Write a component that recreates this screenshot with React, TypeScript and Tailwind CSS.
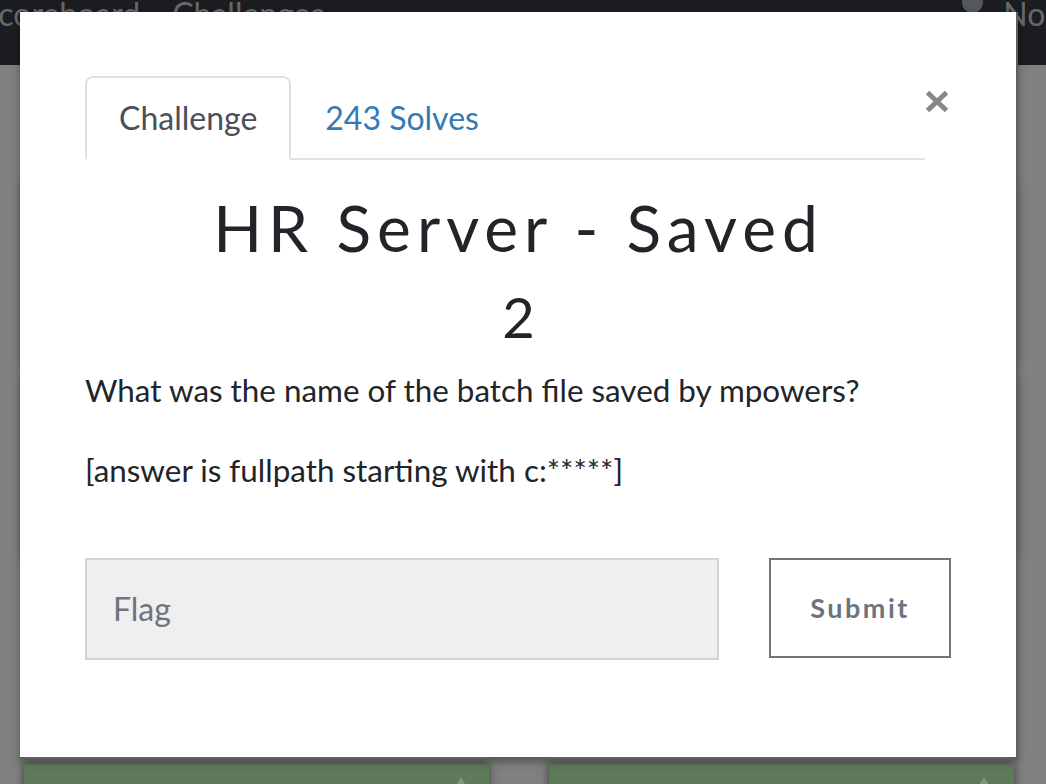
import React from 'react';

const BackgroundPage: React.FC = () => {
  return (
    <div className="absolute inset-0 bg-[#808080]">
      <div className="h-[65px] bg-[#1b1d20] flex items-start text-[32px] leading-none text-[#66696c] overflow-hidden whitespace-nowrap">
        <span className="ml-[-19px] mt-[-2px] shrink-0">Scoreboard</span>
        <span className="ml-[32px] mt-[-2px] shrink-0">Challenges</span>
        <span className="ml-[638px] w-[21px] h-[21px] rounded-full bg-[#55585b] mt-[-8px] shrink-0"></span>
        <span className="ml-[20px] mt-[-2px] shrink-0">Notifications</span>
      </div>
      <div className="grid grid-cols-2 gap-x-[60px] pl-[24px] pr-[32px] pt-[118px]">
        <div className="h-[179px] bg-[#808080] shadow-[0_0_9px_rgba(0,0,0,0.55)]"></div>
        <div className="h-[179px] bg-[#808080] shadow-[0_0_9px_rgba(0,0,0,0.55)]"></div>
        <div className="h-[180px] mt-[16px] bg-[#808080] shadow-[0_0_9px_rgba(0,0,0,0.55)]"></div>
        <div className="h-[180px] mt-[16px] bg-[#808080] shadow-[0_0_9px_rgba(0,0,0,0.55)]"></div>
        <div className="relative h-[120px] mt-[206px] bg-[#5e7a5a] shadow-[0_0_9px_rgba(0,0,0,0.55)]">
          <svg className="absolute right-[22px] top-[13px]" width="12" height="12" viewBox="0 0 12 12">
            <path d="M6 0 L12 10 L0 10 Z" fill="#8a8f89" />
          </svg>
        </div>
        <div className="relative h-[120px] mt-[206px] bg-[#5e7a5a] shadow-[0_0_9px_rgba(0,0,0,0.55)]">
          <svg className="absolute right-[24px] top-[13px]" width="12" height="12" viewBox="0 0 12 12">
            <path d="M6 0 L12 10 L0 10 Z" fill="#8a8f89" />
          </svg>
        </div>
      </div>
    </div>
  );
};

const ChallengeModal: React.FC = () => {
  return (
    <div className="absolute left-[20px] top-[12px] w-[998px] h-[747px] bg-white border-r-2 border-b-2 border-[#5f5f5f] shadow-[0_3px_8px_rgba(0,0,0,0.35)]">
      <div className="pl-[65px] pr-[64px] pt-[64px]">
        <div className="flex items-start">
          <ul className="flex-1 flex border-b-2 border-[#dee2e6]">
            <li className="-mb-[2px] px-[32px] py-[16px] border-2 border-[#dee2e6] border-b-white rounded-t-lg text-[32px] leading-[48px] text-[#495057]">
              Challenge
            </li>
            <li className="-mb-[2px] px-[32px] py-[16px] border-2 border-transparent text-[32px] leading-[48px] text-[#337ab7]">
              243 Solves
            </li>
          </ul>
          <button className="w-[27px] mt-[14px] flex justify-start" aria-label="Close">
            <svg width="24" height="23" viewBox="0 0 24 23">
              <path d="M2.5 2.5 L21.5 20.5 M21.5 2.5 L2.5 20.5" stroke="#878787" strokeWidth="5" />
            </svg>
          </button>
        </div>

        <h2 className="pt-[30px] mb-[16px] text-center text-[64px] leading-[1.2] tracking-[6px] text-[#212529]">
          HR Server - Saved
        </h2>
        <h3 className="mb-[16px] text-center text-[56px] leading-[1.2] text-[#212529]">2</h3>

        <p className="mb-[32px] text-[31.4px] leading-[48px] text-[#212529]">
          What was the name of the batch file saved by mpowers?
        </p>
        <p className="mb-[32px] text-[31.4px] leading-[48px] text-[#212529]">
          [answer is fullpath starting with c:*****]
        </p>

        <div className="flex items-start mt-[64px]">
          <input
            type="text"
            placeholder="Flag"
            className="w-[634px] h-[102px] px-[26px] bg-[#efefef] border-2 border-[#cfd4dc] text-[32px] text-[#495057] placeholder:text-[#6c757d] outline-none"
          />
          <button className="ml-[50px] w-[182px] h-[100px] border-2 border-[#6c757d] bg-white text-[27px] font-bold tracking-[2.5px] text-[#6c757d]">
            Submit
          </button>
        </div>
      </div>
    </div>
  );
};

const App: React.FC = () => {
  return (
    <div className="relative w-[1046px] h-[784px] overflow-hidden font-['Lato',_'Liberation_Sans',_sans-serif]">
      <BackgroundPage />
      <ChallengeModal />
    </div>
  );
};

export default App;
